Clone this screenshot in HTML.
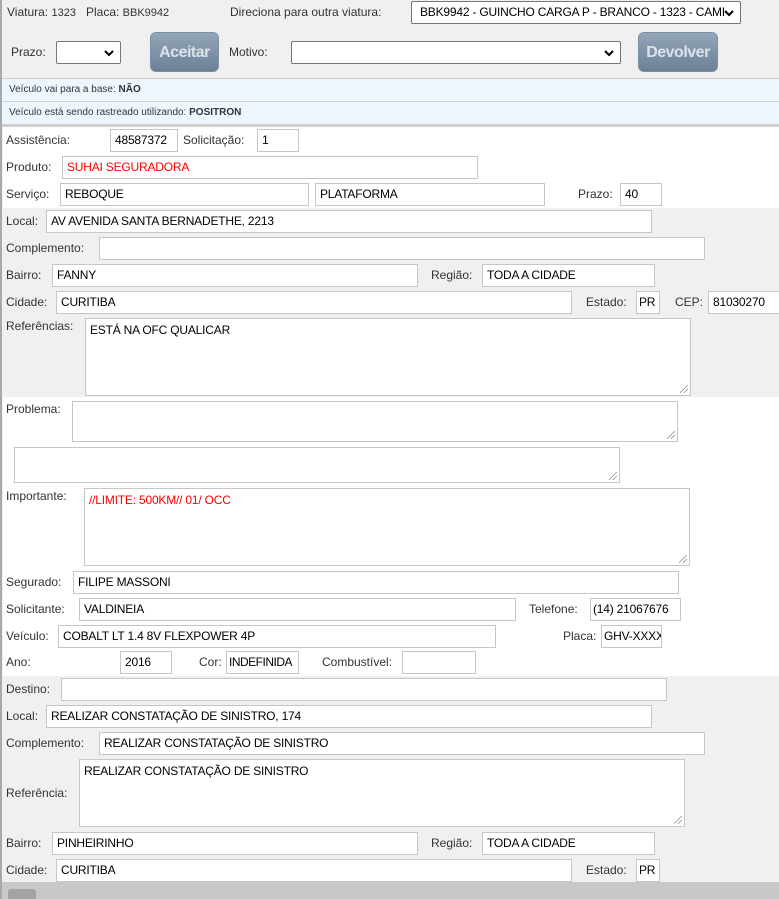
<!DOCTYPE html>
<html><head><meta charset="utf-8"><style>
*{box-sizing:border-box;margin:0;padding:0}
body{width:779px;height:899px;overflow:hidden;background:#f0f0f0;font-family:"Liberation Sans",Arial,sans-serif;font-size:12px;color:#333;position:relative}
.a{position:absolute;white-space:nowrap}
.l{position:absolute;white-space:nowrap;font-size:12px;color:#333;line-height:22px}
.i{position:absolute;background:#fff;border:1px solid #c6c6c6;height:23px;line-height:21px;padding-left:4px;color:#000;font-size:12px;letter-spacing:-0.2px;white-space:nowrap;overflow:hidden}
.t{position:absolute;background:#fff;border:1px solid #c6c6c6;padding:4px 0 0 4px;color:#000;font-size:12px;line-height:14px;letter-spacing:-0.2px}
.t:after{content:"";position:absolute;right:2px;bottom:2px;width:8px;height:8px;background:linear-gradient(135deg,transparent 45%,#888 46%,#888 52%,transparent 53%,transparent 70%,#888 71%,#888 77%,transparent 78%)}
.sel{position:absolute;background:#fff;border:1px solid #767676;border-radius:2px;height:23px;line-height:21px;padding-left:8px;color:#000;font-size:12px;overflow:hidden;white-space:nowrap;letter-spacing:-0.2px}
.sel svg{position:absolute;right:6px;top:7px;background:#fff}
.btn{position:absolute;border-radius:6px;background:linear-gradient(#94a6b8,#6b8097);color:#dde2e8;font-weight:bold;font-size:16px;text-align:center;line-height:40px;height:40px;border:1px solid #7d8fa3;letter-spacing:-0.5px}
.bar{position:absolute;left:2px;width:777px;background:#eef6fd;border-top:1px solid #cfcfcf;font-size:10px;color:#333;padding-left:7px;line-height:22px}
.sec{position:absolute;left:3px;width:776px}
</style></head><body>
<div class="a" style="left:0;top:0;width:2px;height:899px;background:#a9a9a9"></div>
<div class="a" style="left:7px;top:5px;font-size:12px">Viatura: <span style="font-size:11px">1323</span>&nbsp;&nbsp;&nbsp;Placa: <span style="font-size:11px">BBK9942</span></div>
<div class="a" style="left:230px;top:5px;font-size:12px">Direciona para outra viatura:</div>
<div class="sel" style="left:411px;top:1px;width:330px">BBK9942 - GUINCHO CARGA P - BRANCO - 1323 - CAMI<svg width="10" height="8" viewBox="0 0 10 8"><path d="M1 2l4 4 4-4" stroke="#000" stroke-width="2" fill="none"/></svg></div>
<div class="a" style="left:11px;top:45px">Prazo:</div>
<div class="sel" style="left:56px;top:41px;width:65px"><svg width="10" height="8" viewBox="0 0 10 8"><path d="M1 2l4 4 4-4" stroke="#000" stroke-width="2" fill="none"/></svg></div>
<div class="btn" style="left:150px;top:32px;width:69px">Aceitar</div>
<div class="a" style="left:229px;top:45px">Motivo:</div>
<div class="sel" style="left:291px;top:41px;width:330px"><svg width="10" height="8" viewBox="0 0 10 8"><path d="M1 2l4 4 4-4" stroke="#000" stroke-width="2" fill="none"/></svg></div>
<div class="btn" style="left:638px;top:32px;width:80px">Devolver</div>
<div class="bar" style="top:78px;height:24px">Veículo vai para a base: <b>NÃO</b></div>
<div class="bar" style="top:101px;height:24px">Veículo está sendo rastreado utilizando: <b>POSITRON</b></div>
<div class="a" style="left:2px;top:124px;width:777px;height:3px;background:#cfcfcf"></div>
<div class="sec" style="top:127px;height:81px;background:#fff"></div>
<div class="sec" style="top:208px;height:189px;background:#f0f0f0"></div>
<div class="sec" style="top:397px;height:279px;background:#fff"></div>
<div class="sec" style="top:676px;height:206px;background:#f0f0f0"></div>
<div class="a" style="left:2px;top:882px;width:777px;height:17px;background:#c8c8c8"></div>
<div class="a" style="left:8px;top:889px;width:28px;height:10px;background:#8a8a8a;border-radius:3px 3px 0 0;opacity:.6"></div>

<div class="l" style="left:6px;top:129px">Assistência:</div><div class="i" style="left:110px;top:129px;width:68px">48587372</div>
<div class="l" style="left:183px;top:129px">Solicitação:</div><div class="i" style="left:257px;top:129px;width:42px">1</div>
<div class="l" style="left:6px;top:156px">Produto:</div><div class="i" style="left:62px;top:156px;width:416px;color:#f00">SUHAI SEGURADORA</div>
<div class="l" style="left:6px;top:183px">Serviço:</div><div class="i" style="left:60px;top:183px;width:249px">REBOQUE</div><div class="i" style="left:315px;top:183px;width:230px">PLATAFORMA</div>
<div class="l" style="left:578px;top:183px">Prazo:</div><div class="i" style="left:620px;top:183px;width:42px">40</div>

<div class="l" style="left:6px;top:210px">Local:</div><div class="i" style="left:46px;top:210px;width:606px">AV AVENIDA SANTA BERNADETHE, 2213</div>
<div class="l" style="left:6px;top:237px">Complemento:</div><div class="i" style="left:99px;top:237px;width:606px"></div>
<div class="l" style="left:6px;top:264px">Bairro:</div><div class="i" style="left:52px;top:264px;width:366px">FANNY</div>
<div class="l" style="left:431px;top:264px">Região:</div><div class="i" style="left:482px;top:264px;width:173px">TODA A CIDADE</div>
<div class="l" style="left:6px;top:291px">Cidade:</div><div class="i" style="left:56px;top:291px;width:516px">CURITIBA</div>
<div class="l" style="left:586px;top:291px">Estado:</div><div class="i" style="left:636px;top:291px;width:24px;padding-left:2px">PR</div>
<div class="l" style="left:675px;top:291px">CEP:</div><div class="i" style="left:708px;top:291px;width:75px">81030270</div>
<div class="l" style="left:6px;top:315px">Referências:</div><div class="t" style="left:85px;top:318px;width:606px;height:78px">ESTÁ NA OFC QUALICAR</div>

<div class="l" style="left:6px;top:398px">Problema:</div><div class="t" style="left:72px;top:401px;width:606px;height:41px"></div>
<div class="t" style="left:14px;top:447px;width:606px;height:36px"></div>
<div class="l" style="left:6px;top:485px">Importante:</div><div class="t" style="left:84px;top:488px;width:606px;height:78px;color:#f00">//LIMITE: 500KM// 01/ OCC</div>
<div class="l" style="left:6px;top:571px">Segurado:</div><div class="i" style="left:73px;top:571px;width:606px">FILIPE MASSONI</div>
<div class="l" style="left:6px;top:598px">Solicitante:</div><div class="i" style="left:79px;top:598px;width:437px">VALDINEIA</div>
<div class="l" style="left:529px;top:598px">Telefone:</div><div class="i" style="left:590px;top:598px;width:91px;padding-left:2px">(14) 21067676</div>
<div class="l" style="left:6px;top:625px">Veículo:</div><div class="i" style="left:58px;top:625px;width:438px">COBALT LT 1.4 8V FLEXPOWER 4P</div>
<div class="l" style="left:563px;top:625px">Placa:</div><div class="i" style="left:601px;top:625px;width:61px;padding-left:2px">GHV-XXXX</div>
<div class="l" style="left:6px;top:651px">Ano:</div><div class="i" style="left:120px;top:651px;width:52px">2016</div>
<div class="l" style="left:199px;top:651px">Cor:</div><div class="i" style="left:226px;top:651px;width:73px;padding-left:2px;letter-spacing:-0.5px">INDEFINIDA</div>
<div class="l" style="left:322px;top:651px">Combustível:</div><div class="i" style="left:402px;top:651px;width:74px"></div>

<div class="l" style="left:6px;top:678px">Destino:</div><div class="i" style="left:61px;top:678px;width:606px"></div>
<div class="l" style="left:6px;top:705px">Local:</div><div class="i" style="left:46px;top:705px;width:606px">REALIZAR CONSTATAÇÃO DE SINISTRO, 174</div>
<div class="l" style="left:6px;top:732px">Complemento:</div><div class="i" style="left:99px;top:732px;width:606px">REALIZAR CONSTATAÇÃO DE SINISTRO</div>
<div class="l" style="left:6px;top:782px">Referência:</div><div class="t" style="left:79px;top:759px;width:606px;height:68px">REALIZAR CONSTATAÇÃO DE SINISTRO</div>
<div class="l" style="left:6px;top:832px">Bairro:</div><div class="i" style="left:52px;top:832px;width:366px">PINHEIRINHO</div>
<div class="l" style="left:431px;top:832px">Região:</div><div class="i" style="left:482px;top:832px;width:173px">TODA A CIDADE</div>
<div class="l" style="left:6px;top:859px">Cidade:</div><div class="i" style="left:56px;top:859px;width:516px">CURITIBA</div>
<div class="l" style="left:586px;top:859px">Estado:</div><div class="i" style="left:636px;top:859px;width:24px;padding-left:2px">PR</div>
</body></html>
